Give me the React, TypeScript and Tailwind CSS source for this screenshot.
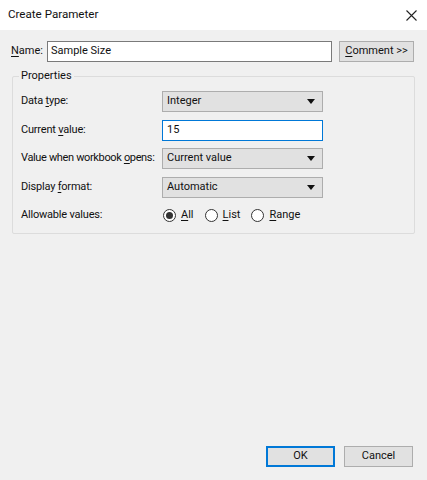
const FONT = "font-['Segoe_UI','Roboto',sans-serif]";

function U({ children }: { children: string }) {
  return <span className="underline underline-offset-2">{children}</span>;
}

function Select({ value }: { value: string }) {
  return (
    <div className="flex h-[21px] w-[161px] items-center justify-between border border-[#adadad] bg-[#e1e1e1] pl-[4px] pr-[7px]">
      <span>{value}</span>
      <svg width="8" height="5" viewBox="0 0 8 5">
        <path d="M0 0h8L4 5z" fill="#111" />
      </svg>
    </div>
  );
}

function Radio({ checked, children }: { checked?: boolean; children: React.ReactNode }) {
  return (
    <div className="flex items-center gap-[5px]">
      <span className="flex h-[13px] w-[13px] items-center justify-center rounded-full border border-[#333] bg-white">
        {checked && <span className="h-[7px] w-[7px] rounded-full bg-[#333]" />}
      </span>
      <span>{children}</span>
    </div>
  );
}

function Row({ label, children }: { label: React.ReactNode; children: React.ReactNode }) {
  return (
    <div className="flex h-[21px] items-center">
      <div className="w-[141px] shrink-0 whitespace-nowrap tracking-[-0.2px]">{label}</div>
      {children}
    </div>
  );
}

export default function App() {
  return (
    <div className={"flex h-[480px] w-[427px] flex-col bg-[#f0f0f0] text-[11px] text-[#111] " + FONT}>
      <div className="flex h-[30px] items-center justify-between bg-white pl-[8px] pr-[10px]">
        <span className="text-[11.6px]">Create Parameter</span>
        <svg width="11" height="11" viewBox="0 0 11 11">
          <path d="M0.5 0.5l10 10M10.5 0.5l-10 10" stroke="#222" strokeWidth="1.1" />
        </svg>
      </div>

      <div className="flex items-center pl-[11px] pr-[13px] pt-[11px]">
        <span className="w-[36px] whitespace-nowrap">
          <U>N</U>ame:
        </span>
        <div className="flex h-[21px] w-[285px] items-center border border-[#7a7a7a] bg-white pl-[3px]">
          Sample Size
        </div>
        <div className="ml-[7px] flex h-[21px] flex-1 items-center justify-center whitespace-nowrap border border-[#adadad] bg-[#e1e1e1]">
          <span>
            <U>C</U>omment &gt;&gt;
          </span>
        </div>
      </div>

      <div className="relative mx-[12px] mt-[14px] h-[158px] rounded-[2px] border border-[#dcdcdc]">
        <span className="absolute left-[6px] top-[-9px] bg-[#f0f0f0] px-[2px] leading-[16px]">Properties</span>
        <div className="flex flex-col gap-[7.5px] pl-[8px] pt-[14px]">
          <Row label={<>Data <U>t</U>ype:</>}>
            <Select value="Integer" />
          </Row>
          <Row label={<>Current <U>v</U>alue:</>}>
            <div className="flex h-[21px] w-[161px] items-center border border-[#0078d7] bg-white pl-[4px]">15</div>
          </Row>
          <Row label={<span className="tracking-[-0.35px]">Value when workbook <U>o</U>pens:</span>}>
            <Select value="Current value" />
          </Row>
          <Row label={<>Display <U>f</U>ormat:</>}>
            <Select value="Automatic" />
          </Row>
          <Row label="Allowable values:">
            <div className="flex items-center gap-[11px] pl-[1px]">
              <Radio checked><U>A</U>ll</Radio>
              <Radio><U>L</U>ist</Radio>
              <Radio><U>R</U>ange</Radio>
            </div>
          </Row>
        </div>
      </div>

      <div className="mt-auto flex justify-end gap-[9px] pb-[13px] pr-[14px]">
        <div className="flex h-[21px] w-[69px] items-center justify-center border-2 border-[#0078d7] bg-[#e1e1e1]">OK</div>
        <div className="flex h-[21px] w-[69px] items-center justify-center border border-[#adadad] bg-[#e1e1e1]">Cancel</div>
      </div>
    </div>
  );
}
